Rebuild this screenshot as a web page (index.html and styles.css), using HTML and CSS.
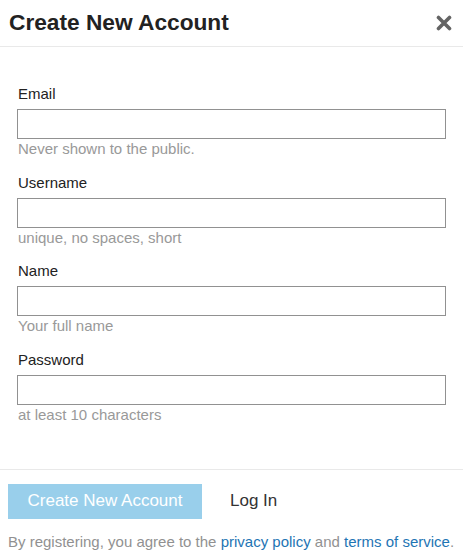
FILE: index.html
```html
<!DOCTYPE html>
<html lang="en">
<head>
<meta charset="utf-8">
<title>Create New Account</title>
<link rel="stylesheet" href="styles.css">
</head>
<body>
<div class="modal">
  <header class="modal-header">
    <h1 class="title">Create New Account</h1>
    <button class="close" aria-label="close">
      <svg width="16" height="16" viewBox="0 0 16 16"><path d="M2.5 2.5 L13.5 13.5 M13.5 2.5 L2.5 13.5" stroke="#646464" stroke-width="3.6" stroke-linecap="round"/></svg>
    </button>
  </header>
  <form class="modal-body">
    <div class="field">
      <label class="label">Email</label>
      <input class="input" type="text">
      <div class="help">Never shown to the public.</div>
    </div>
    <div class="field">
      <label class="label">Username</label>
      <input class="input" type="text">
      <div class="help">unique, no spaces, short</div>
    </div>
    <div class="field">
      <label class="label">Name</label>
      <input class="input" type="text">
      <div class="help">Your full name</div>
    </div>
    <div class="field">
      <label class="label">Password</label>
      <input class="input" type="password">
      <div class="help">at least 10 characters</div>
    </div>
  </form>
  <footer class="modal-footer">
    <div class="actions">
      <button class="btn-primary" disabled>Create New Account</button>
      <button class="btn-link">Log In</button>
    </div>
    <p class="disclaimer">By registering, you agree to the <a href="#">privacy policy</a> and <a href="#">terms of service</a>.</p>
  </footer>
</div>
</body>
</html>
```
FILE: styles.css
```css
* { box-sizing: border-box; }
html, body { margin: 0; padding: 0; background: #fff; }
body {
  font-family: "Liberation Sans", Arial, sans-serif;
  color: #222;
  width: 463px;
}
.modal-header {
  display: flex;
  align-items: center;
  justify-content: space-between;
  height: 47px;
  padding: 0 11px 2px 9px;
  border-bottom: 1px solid #e9e9e9;
}
.title {
  margin: 0;
  font-size: 22.7px;
  line-height: 26px;
  font-weight: bold;
  color: #222;
}
.close {
  border: 0;
  background: none;
  padding: 0;
  width: 16px;
  height: 16px;
  display: flex;
  margin-top: 1px;
}
.modal-body {
  padding: 38px 17px 29px 17px;
  margin: 0;
}
.field {
  display: flex;
  flex-direction: column;
  margin-bottom: 15.7px;
}
.label {
  font-size: 15px;
  line-height: 18px;
  padding-left: 1px;
  color: #222;
}
.input {
  margin-top: 6px;
  width: 429px;
  height: 30px;
  border: 1px solid #919191;
  border-radius: 0;
  padding: 4px 6px;
  font: inherit;
  background: #fff;
}
.help {
  margin-top: 1px;
  font-size: 15px;
  line-height: 18px;
  color: #999;
  padding-left: 1px;
}
.modal-footer {
  border-top: 1px solid #e9e9e9;
  padding: 14px 8px 0 8px;
}
.actions {
  display: flex;
  align-items: center;
}
.btn-primary {
  height: 35px;
  width: 194px;
  border: 0;
  background: #99cfeb;
  color: #fff;
  font: inherit;
  font-size: 17px;
  padding: 0;
}
.btn-link {
  margin-left: 28px;
  border: 0;
  background: none;
  font: inherit;
  font-size: 17px;
  color: #333;
  padding: 0;
}
.disclaimer {
  margin: 14px 0 0 0;
  font-size: 15px;
  line-height: 18px;
  color: #919191;
  white-space: nowrap;
}
.disclaimer a {
  color: #1e75b4;
  text-decoration: none;
}
```
